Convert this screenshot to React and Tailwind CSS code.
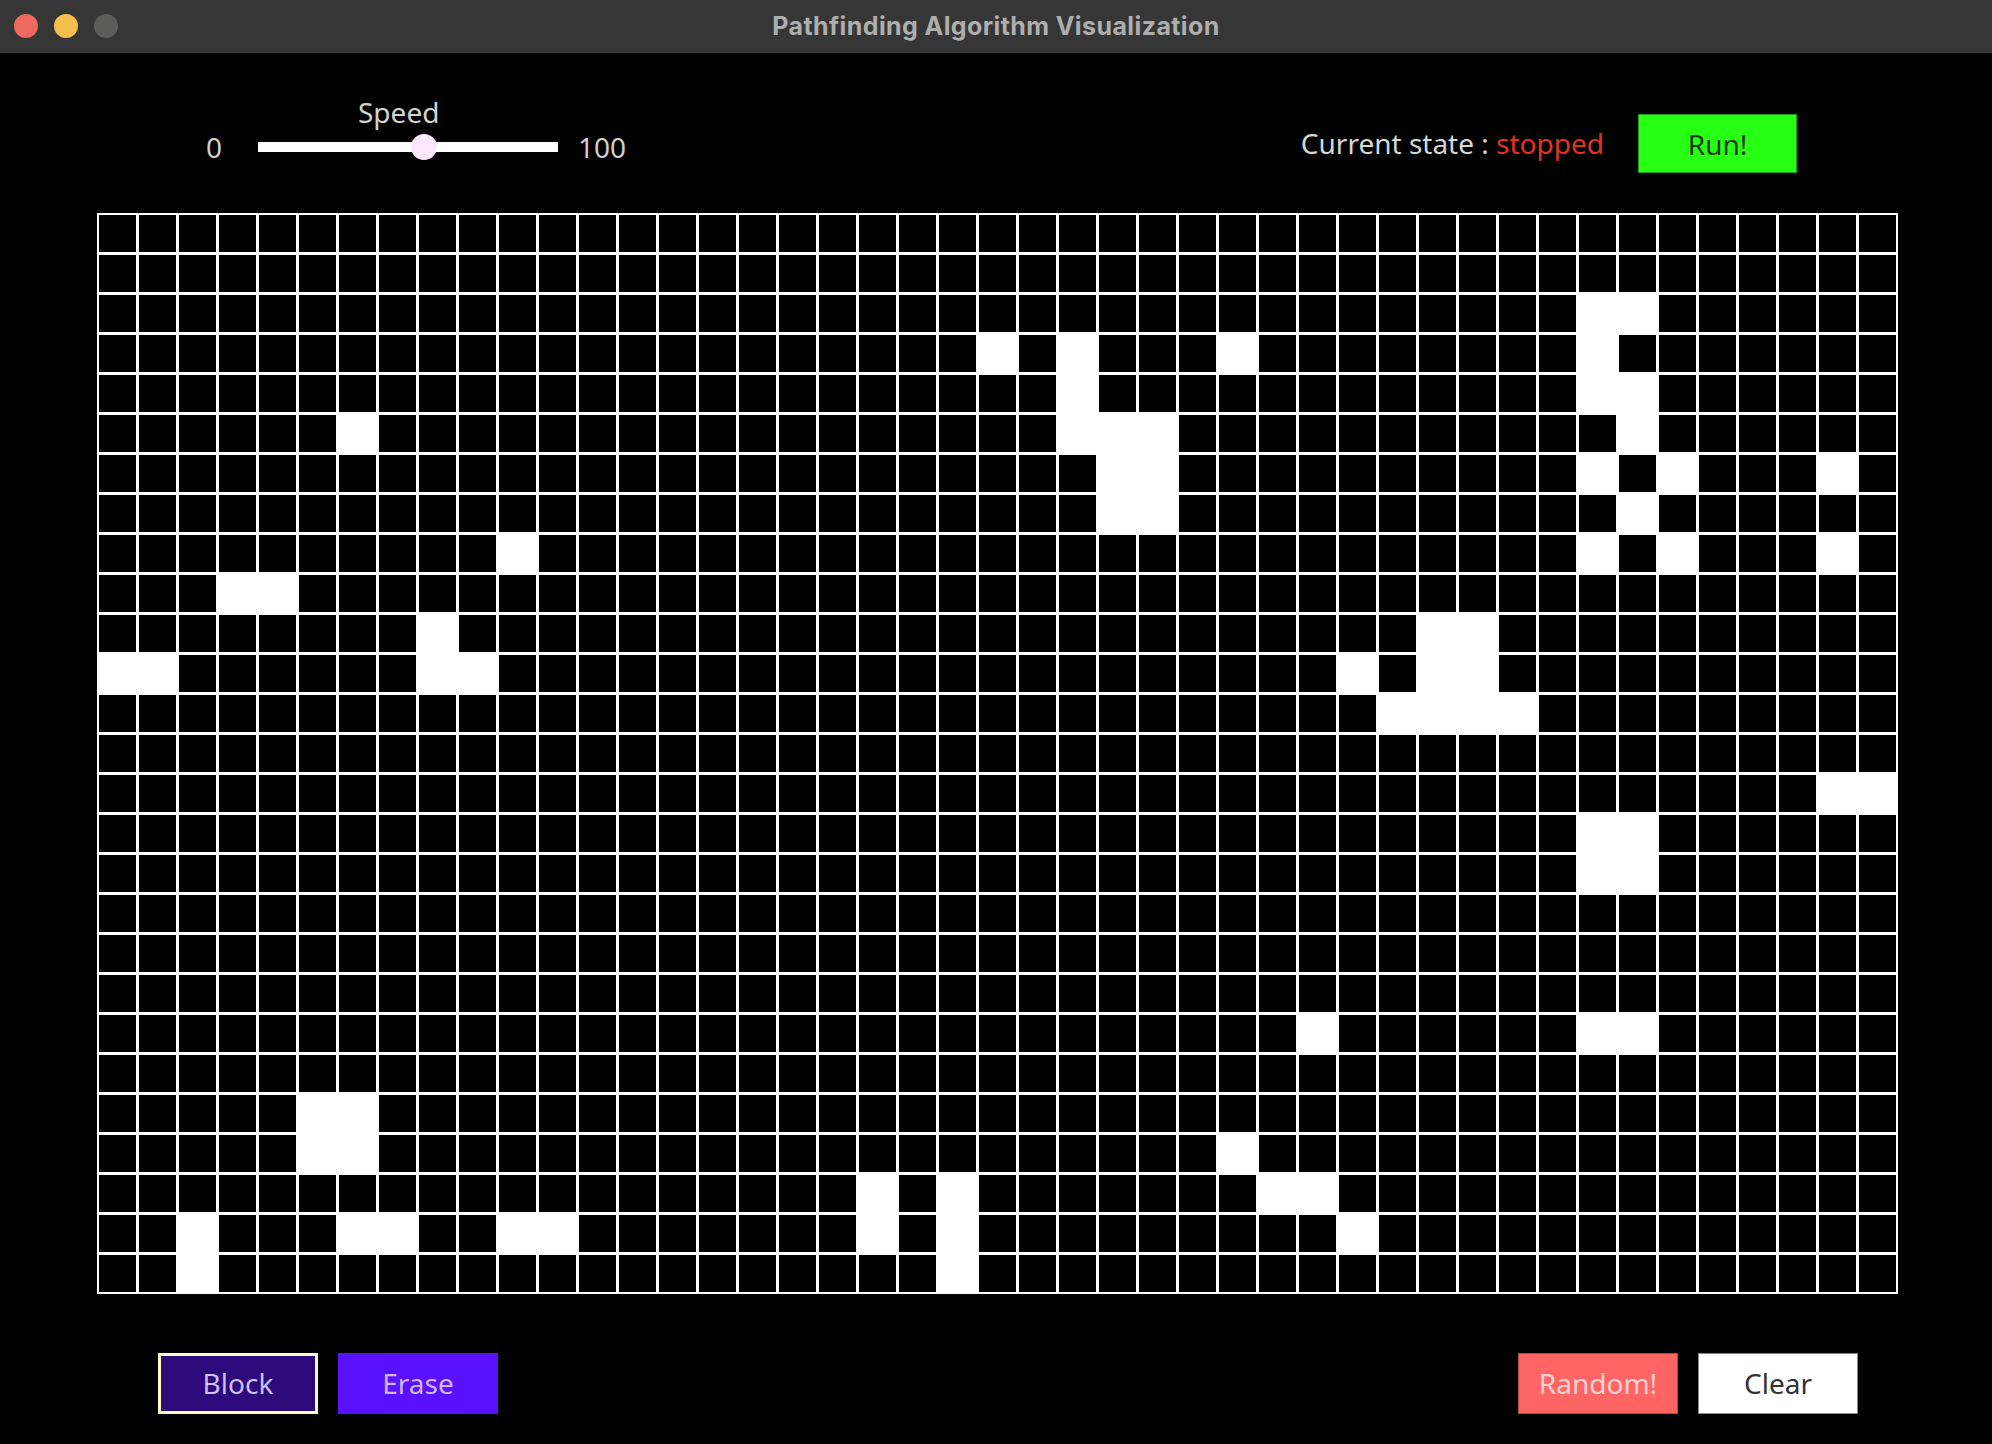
import React from 'react'

const ROWS = 27
const COLS = 45

// wall cells per row
const walls = {
    2: [37, 38],
    3: [22, 24, 28, 37],
    4: [24, 37, 38],
    5: [6, 24, 25, 26, 38],
    6: [25, 26, 37, 39, 43],
    7: [25, 26, 38],
    8: [10, 37, 39, 43],
    9: [3, 4],
    10: [8, 33, 34],
    11: [0, 1, 8, 9, 31, 33, 34],
    12: [32, 33, 34, 35],
    14: [43, 44],
    15: [37, 38],
    16: [37, 38],
    20: [30, 37, 38],
    22: [5, 6],
    23: [5, 6, 28],
    24: [19, 21, 29, 30],
    25: [2, 6, 7, 10, 11, 19, 21, 31],
    26: [2, 21],
}

const isWall = (r, c) => (walls[r] || []).includes(c)

const TitleBar = () => (
    <div className="relative h-[53px] bg-[#363636] flex items-center justify-center shrink-0">
        <div className="absolute left-[14px] top-[14px] flex gap-[16px]">
            <span className="w-[24px] h-[24px] rounded-full bg-[#ee6a5f]" />
            <span className="w-[24px] h-[24px] rounded-full bg-[#f5bf4f]" />
            <span className="w-[24px] h-[24px] rounded-full bg-[#5c5c5b]" />
        </div>
        <span className="font-['Inter',sans-serif] font-bold text-[25px] tracking-[0.4px] text-[#aeaeae]">
            Pathfinding Algorithm Visualization
        </span>
    </div>
)

const SpeedSlider = () => (
    <div className="flex flex-col pl-[206px] pt-[45px]">
        <span className="ml-[152px] text-[28px] leading-none text-[#d2d2d2]">Speed</span>
        <div className="mt-[8px] h-[26px] flex items-center">
            <span className="text-[28px] leading-none text-[#cfcfcf]">0</span>
            <div className="relative ml-[36px] w-[300px] h-[10px] bg-white">
                <div className="absolute left-[153px] top-[-8px] w-[26px] h-[26px] rounded-full bg-[#fce8fb]" />
            </div>
            <span className="ml-[20px] text-[28px] leading-none text-[#cfcfcf]">100</span>
        </div>
    </div>
)

const StateBox = () => (
    <div className="flex items-center gap-[34px] pr-[195px] mt-[61px]">
        <span className="text-[28px] leading-none text-[#d6d6d6] -mt-[2px]">
            Current state : <span className="text-[#e2331f]">stopped</span>
        </span>
        <button className="w-[159px] h-[59px] bg-[#27ff15] border border-[#1c9c10] text-[28px] leading-none text-[#1b3a12]">
            Run!
        </button>
    </div>
)

const Grid = () => (
    <div className="ml-[97px] w-[1801px] p-[2px] bg-white grid grid-cols-[repeat(45,37px)] gap-[3px]">
        {Array.from({ length: ROWS }).map((_, r) =>
            Array.from({ length: COLS }).map((_, c) => (
                <div key={r + '-' + c} className={`h-[37px] ${isWall(r, c) ? 'bg-white' : 'bg-black'}`} />
            ))
        )}
    </div>
)

export default function App() {
    return (
        <div className="w-[1992px] h-[1444px] bg-black flex flex-col overflow-hidden font-['Noto_Sans',sans-serif]">
            <TitleBar />

            <div className="h-[160px] flex justify-between items-start">
                <SpeedSlider />
                <StateBox />
            </div>

            <Grid />

            <div className="mt-[59px] flex justify-between">
                <div className="flex gap-[20px] pl-[158px]">
                    <button className="w-[160px] h-[61px] pb-[2px] bg-[#2c0a7c] border-[3px] border-[#fffbc9] text-[28px] leading-none text-[#cdbff0]">
                        Block
                    </button>
                    <button className="w-[160px] h-[61px] pb-[2px] bg-[#5a11ff] text-[28px] leading-none text-[#cdb8ff]">
                        Erase
                    </button>
                </div>
                <div className="flex gap-[20px] pr-[134px]">
                    <button className="w-[160px] h-[61px] pb-[2px] bg-[#ff6565] border border-[#b04848] text-[28px] leading-none text-[#ffd2d2]">
                        Random!
                    </button>
                    <button className="w-[160px] h-[61px] pb-[2px] bg-white border border-[#8a8a8a] text-[28px] leading-none text-[#333333]">
                        Clear
                    </button>
                </div>
            </div>
        </div>
    )
}
